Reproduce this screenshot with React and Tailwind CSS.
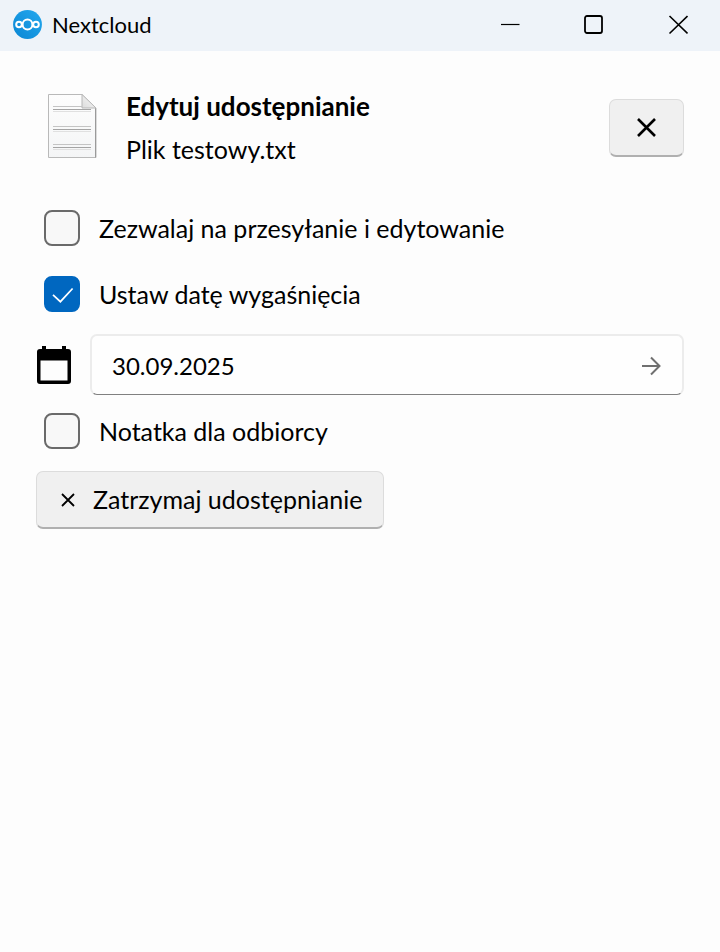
import { useState } from "react";

function CheckRow({ id, label, checked, onChange }) {
  return (
    <div className="flex items-center gap-[19px] pl-2">
      <span className="relative flex shrink-0">
        <input
          id={id}
          type="checkbox"
          checked={checked}
          onChange={(e) => onChange(e.target.checked)}
          className="size-9 appearance-none rounded-[8px] border-2 border-[#6a6a6a] bg-[#f8f8f8] checked:border-[#0067c0] checked:bg-[#0067c0]"
        />
        {checked && (
          <svg viewBox="0 0 36 36" className="pointer-events-none absolute inset-0 size-9" fill="none" stroke="#fff" strokeWidth="1.7">
            <path d="M9 18.8L16.4 25.7L28.6 12.5" />
          </svg>
        )}
      </span>
      <label htmlFor={id} className="text-[25px] leading-9">{label}</label>
    </div>
  );
}

function CloudLogo() {
  return (
    <svg viewBox="0 0 30 30" className="size-[30px]" fill="none">
      <defs>
        <linearGradient id="logo" x1="0" y1="1" x2="1" y2="0">
          <stop offset="0" stopColor="#0a86d4" />
          <stop offset="1" stopColor="#24a8ee" />
        </linearGradient>
      </defs>
      <circle cx="15.5" cy="14.5" r="14.4" fill="url(#logo)" />
      <g stroke="#fff" strokeWidth="2">
        <circle cx="15.5" cy="14.5" r="4.9" />
        <circle cx="7" cy="14.5" r="2.8" />
        <circle cx="24" cy="14.5" r="2.8" />
      </g>
    </svg>
  );
}

function TextFileIcon() {
  return (
    <svg viewBox="0 0 50 66" className="h-[66px] w-[50px]" fill="none">
      <defs>
        <linearGradient id="paper" x1="0" y1="0" x2="0" y2="1">
          <stop offset="0" stopColor="#fdfdfd" />
          <stop offset="1" stopColor="#f4f5f6" />
        </linearGradient>
        <linearGradient id="fold" x1="0" y1="1" x2="1" y2="0">
          <stop offset="0" stopColor="#dcdcdc" />
          <stop offset="1" stopColor="#fafafa" />
        </linearGradient>
      </defs>
      <path d="M.5 1.500H34L48 15V64.500H.5Z" fill="url(#paper)" stroke="#b9b9b9" />
      <path d="M47.500 15V64.500" stroke="#9a9a9a" />
      <path d="M34 1.500V15H48Z" fill="url(#fold)" stroke="#b8b8b8" />
      <path d="M5 13.500H34M5 33.500H43M5 51.500H43" stroke="#c4c4c4" />
      <path d="M5 16.500H43M5 36.500H43M5 54.500H43" stroke="#a4a4a4" />
      <path d="M5 18.500H43M5 38.500H43M5 56.500H43" stroke="#e0e0e0" />
    </svg>
  );
}

export default function App() {
  const [canEdit, setCanEdit] = useState(false);
  const [hasExpiry, setHasExpiry] = useState(true);
  const [hasNote, setHasNote] = useState(false);
  const [date, setDate] = useState("30.09.2025");

  return (
    <div className="min-h-screen bg-[#fdfdfd] font-['Lato','Open_Sans',sans-serif] text-black">
      {/* Title bar */}
      <header className="flex h-[51px] items-center bg-[#eef3f9]">
        <div className="flex flex-1 items-center gap-[10px] pl-3 pb-[2px]">
          <CloudLogo />
          <span className="text-[22px] leading-7">Nextcloud</span>
        </div>
        <button aria-label="Minimalizuj" className="flex h-full w-[84px] items-center justify-center pb-[2px]">
          <svg viewBox="0 0 20 20" className="size-5" fill="none" stroke="#000">
            <path d="M1 9.500H19.500" strokeWidth="1.2" />
          </svg>
        </button>
        <button aria-label="Maksymalizuj" className="flex h-full w-[84px] items-center justify-center pb-[2px]">
          <svg viewBox="0 0 20 20" className="size-5" fill="none" stroke="#000">
            <rect x="1" y="1" width="17" height="17" rx="2" strokeWidth="1.8" />
          </svg>
        </button>
        <button aria-label="Zamknij" className="flex h-full w-[84px] items-center justify-center pb-[2px]">
          <svg viewBox="0 0 20 20" className="size-5" fill="none" stroke="#000">
            <path d="M1.500 1L19.500 18.500M19.500 1L1.500 18.500" strokeWidth="1.6" />
          </svg>
        </button>
      </header>

      <main className="px-9 pt-[34px]">
        {/* File header */}
        <div className="flex items-center">
          <div className="pb-1 pl-3">
            <TextFileIcon />
          </div>
          <div className="flex-1 pl-7">
            <h1 className="text-[26px] leading-[43px] font-bold">Edytuj udostępnianie</h1>
            <p className="text-[25px] leading-[43px]">Plik testowy.txt</p>
          </div>
          <button
            aria-label="Zamknij udostępnianie"
            className="flex h-[58px] w-[75px] items-center justify-center rounded-[7px] border border-[#dcdcdc] border-b-2 border-b-[#b0b0b0] bg-[#f0f0f0]"
          >
            <svg viewBox="0 0 20 20" className="size-5" fill="none" stroke="#000" strokeWidth="2.6">
              <path d="M1 1L18 18M18 1L1 18" />
            </svg>
          </button>
        </div>

        {/* Share options */}
        <div className="mt-[39px] flex flex-col gap-[30px]">
          <CheckRow id="edit" label="Zezwalaj na przesyłanie i edytowanie" checked={canEdit} onChange={setCanEdit} />
          <CheckRow id="expiry" label="Ustaw datę wygaśnięcia" checked={hasExpiry} onChange={setHasExpiry} />
        </div>

        <div className="mt-[22px] mb-[18px] flex items-center gap-[18px]">
          <svg viewBox="0 0 36 40" className="h-10 w-9 shrink-0" fill="#000">
            <path d="M6 1H10V4H26V1H30V4H32Q35 4 35 7V36Q35 39 32 39H4Q1 39 1 36V7Q1 4 4 4H6ZM4.500 15.500V35.500H31.500V15.500Z" fillRule="evenodd" />
          </svg>
          <div className="flex h-[61px] flex-1 items-center rounded-[7px] border-2 border-[#ececec] border-b border-b-[#808080] bg-[#fefefe] px-5 pt-[2px]">
            <input
              aria-label="Data wygaśnięcia"
              value={date}
              onChange={(e) => setDate(e.target.value)}
              className="min-w-0 flex-1 bg-transparent text-[24px] outline-none"
            />
            <button aria-label="Zapisz datę">
              <svg viewBox="0 0 20 20" className="size-5" fill="none" stroke="#707070" strokeWidth="2">
                <path d="M0 10H17M9 1.500L17.500 10L9 18.500" />
              </svg>
            </button>
          </div>
        </div>

        <CheckRow id="note" label="Notatka dla odbiorcy" checked={hasNote} onChange={setHasNote} />

        <button className="mt-[22px] flex h-[58px] items-center gap-[18px] rounded-[7px] border border-[#dcdcdc] border-b-2 border-b-[#b0b0b0] bg-[#f0f0f0] px-[21px] pl-6">
          <svg viewBox="0 0 14 14" className="size-[14px]" fill="none" stroke="#000" strokeWidth="1.800">
            <path d="M1 1L13 13M13 1L1 13" />
          </svg>
          <span className="text-[25px]">Zatrzymaj udostępnianie</span>
        </button>
      </main>
    </div>
  );
}
